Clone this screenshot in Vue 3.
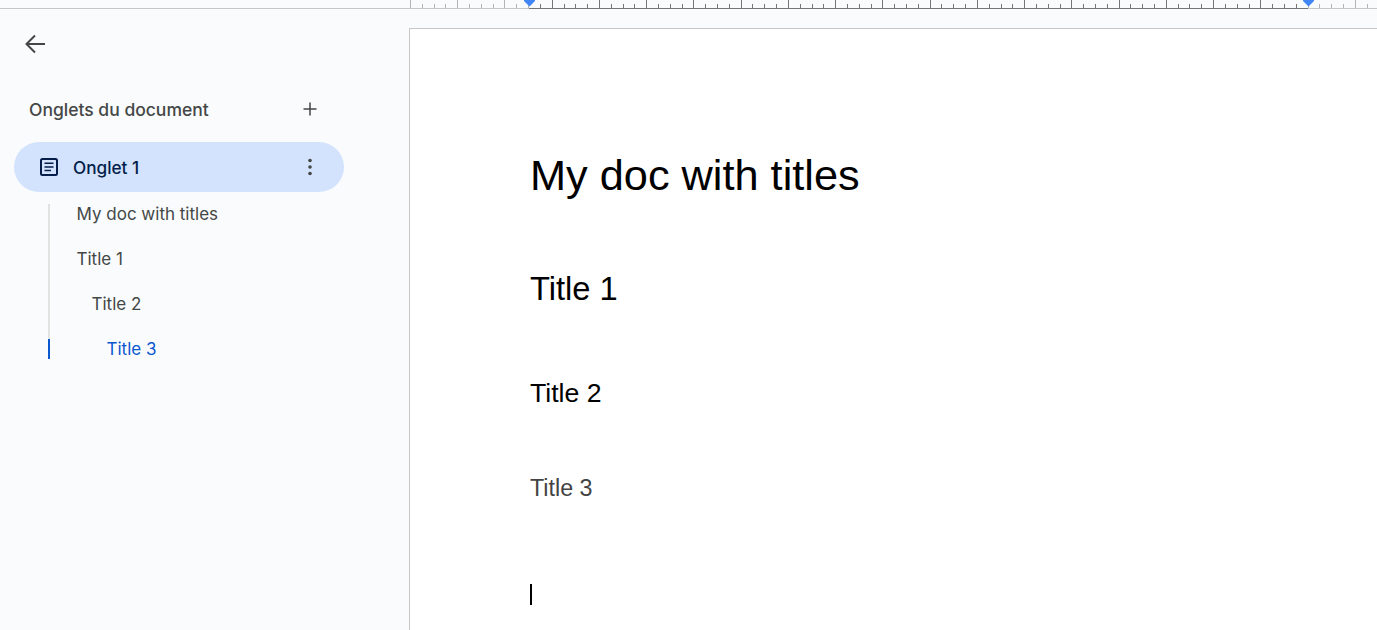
<template>
  <div class="app">
    <svg class="ruler" width="1377" height="9" viewBox="0 0 1377 9">
      <rect x="0" y="8" width="1377" height="1" fill="#c7c7c7" />
      <rect x="529" y="8" width="779" height="1" fill="#757575" />
      <line
        v-for="tick in ticks"
        :key="tick.x"
        :x1="tick.x"
        :x2="tick.x"
        :y1="tick.top"
        y2="8"
        :stroke="tick.color"
        stroke-width="1"
      />
      <path d="M524 0h11v1l-5.5 5.5L524 1z" fill="#4285f4" />
      <path d="M1303 0h11v1l-5.5 5.5L1303 1z" fill="#4285f4" />
    </svg>

    <div class="main">
      <aside class="sidebar">
        <button class="back">
          <svg width="24" height="24" viewBox="0 0 24 24">
            <path d="M21 12H3M11 3.5L2.5 12l8.5 8.5" fill="none" stroke="#444746" stroke-width="2" />
          </svg>
        </button>

        <div class="tabs-head">
          <span>Onglets du document</span>
          <svg width="16" height="16" viewBox="0 0 16 16">
            <path d="M7.25 1.5h1.5v5.75h5.75v1.5H8.75v5.75h-1.5V8.75H1.5v-1.5h5.75z" fill="#444746" />
          </svg>
        </div>

        <div class="tab">
          <svg class="tab-icon" width="20" height="20" viewBox="0 0 20 20">
            <rect x="2" y="2" width="16" height="16" rx="1.5" fill="none" stroke="#041e49" stroke-width="2" />
            <path d="M5.5 5.6h9v1.5h-9zM5.5 9.2h9v1.5h-9zM5.5 12.8h6.5v1.5H5.5z" fill="#041e49" />
          </svg>
          <span class="tab-label">Onglet 1</span>
          <svg class="tab-more" width="20" height="20" viewBox="0 0 20 20">
            <circle cx="10" cy="3.5" r="1.8" fill="#444746" />
            <circle cx="10" cy="10" r="1.8" fill="#444746" />
            <circle cx="10" cy="16.5" r="1.8" fill="#444746" />
          </svg>
        </div>

        <ul class="outline">
          <li
            v-for="item in outline"
            :key="item.text"
            :class="['outline-item', `level-${item.level}`, { active: item.active }]"
          >
            {{ item.text }}
          </li>
        </ul>
      </aside>

      <div class="page">
        <h1>My doc with titles</h1>
        <h2>Title 1</h2>
        <h3>Title 2</h3>
        <h4>Title 3</h4>
        <div class="caret"></div>
      </div>
    </div>
  </div>
</template>

<script setup>
const outline = [
  { text: 'My doc with titles', level: 0 },
  { text: 'Title 1', level: 0 },
  { text: 'Title 2', level: 1 },
  { text: 'Title 3', level: 2, active: true }
];

// un pouce = 94.5px, un trait tous les 1/8
const step = 94.48 / 8;
const ticks = [];
for (let i = 0; i * step < 967; i++) {
  const x = Math.round(410 + i * step) + 0.5;
  const inside = x > 529 && x < 1308;
  ticks.push({
    x,
    top: i % 4 === 0 ? 0 : 4,
    color: inside ? '#757575' : '#b4b4b4'
  });
}
</script>

<style scoped>
.app {
  width: 1377px;
  height: 630px;
  overflow: hidden;
  display: flex;
  flex-direction: column;
  background: #f9fbfd;
}

.ruler {
  display: block;
  flex: none;
}

.main {
  flex: 1;
  display: flex;
  min-height: 0;
}

.sidebar {
  width: 409px;
  flex: none;
  font-family: Inter, Roboto, "Liberation Sans", sans-serif;
}

.back {
  display: block;
  width: 24px;
  height: 24px;
  margin: 23px 0 0 24px;
  padding: 0;
  border: none;
  background: none;
}

.tabs-head {
  width: 289px;
  margin: 41px 0 0 29px;
  height: 24px;
  display: flex;
  align-items: center;
  justify-content: space-between;
  font-size: 17.5px;
  font-weight: 500;
  color: #444746;
}

.tab {
  width: 330px;
  height: 50px;
  margin: 21px 0 0 14px;
  padding: 0 24px 0 25px;
  box-sizing: border-box;
  display: flex;
  align-items: center;
  border-radius: 25px;
  background: #d3e3fd;
  color: #041e49;
  font-size: 17.2px;
  font-weight: 500;
}

.tab-label {
  flex: 1;
  margin-left: 14px;
}

.outline {
  list-style: none;
  margin: 12px 0 0 48px;
  padding: 0;
}

.outline-item {
  height: 45px;
  padding-left: 26.5px;
  font-size: 17px;
  line-height: 20px;
  color: #444746;
  border-left: 2px solid #e1e3e1;
  box-sizing: border-box;
}

.level-1 {
  padding-left: 41.5px;
}

.level-2 {
  padding-left: 56.5px;
}

.outline-item.active {
  height: 20px;
  color: #0b57d0;
  border-left-color: #0b57d0;
}

.page {
  flex: 1;
  background: #fff;
  border-left: 1px solid #c7c7c7;
  border-top: 1px solid #c7c7c7;
  margin-top: 19px;
  padding: 120px 0 0 120px;
  font-family: "Liberation Sans", Arial, sans-serif;
  color: #000;
}

.page h1,
.page h2,
.page h3,
.page h4 {
  margin: 0;
  font-weight: 400;
}

.page h1 {
  font-size: 43.3px;
  line-height: 52px;
}

.page h2 {
  font-size: 32.7px;
  line-height: 40px;
  margin-top: 68px;
}

.page h3 {
  font-size: 26.67px;
  line-height: 32px;
  margin-top: 68px;
}

.page h4 {
  font-size: 23.3px;
  line-height: 30px;
  margin-top: 64px;
  color: #434343;
}

.caret {
  width: 2px;
  height: 21px;
  background: #000;
  margin-top: 81px;
}
</style>
